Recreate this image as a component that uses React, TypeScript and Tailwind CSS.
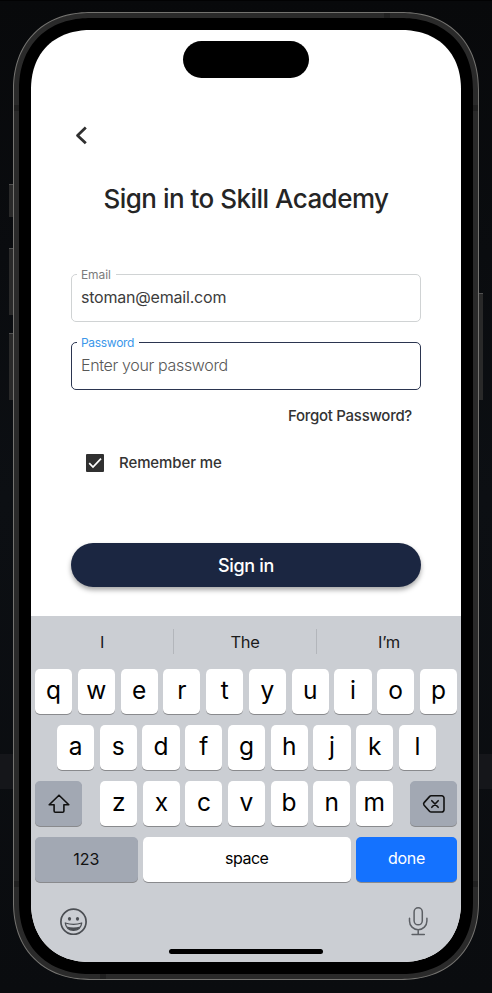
import type { ReactNode } from "react";

function Field({ label, value, focused }: { label: string; value: string; focused?: boolean }) {
  return (
    <fieldset
      className={`h-[54px] rounded-[5px] border px-[5px] ${
        focused ? "border-[#2b3550]" : "border-[#d0d3d4]"
      }`}
    >
      <legend
        className={`h-[12px] px-[4px] pt-[0.5px] text-[12px] leading-[12px] ${
          focused ? "w-[62px] tracking-[-0.3px] text-[#3b97ea]" : "w-[39px] tracking-[-0.1px] text-[#7b7b7b]"
        }`}
      >
        {label}
      </legend>
      <div
        className={`px-[4px] pt-[7px] text-[16px] leading-[20px] whitespace-nowrap ${
          focused ? "font-light tracking-[-0.34px] text-[#585858]" : "tracking-[-0.2px] text-[#3c3c3c]"
        }`}
      >
        {value}
      </div>
    </fieldset>
  );
}

function Key({ children, className = "" }: { children: ReactNode; className?: string }) {
  return (
    <div
      className={`flex h-[45px] items-center justify-center rounded-[5px] shadow-[0_1px_0_#898a8d] ${className}`}
    >
      {children}
    </div>
  );
}

function Letters({ keys }: { keys: string }) {
  return (
    <>
      {keys.split("").map((k) => (
        <Key key={k} className="min-w-0 flex-1 bg-white pb-[3px] text-[24.5px] leading-[30px] font-[380] text-black">
          {k}
        </Key>
      ))}
    </>
  );
}

function Keyboard() {
  return (
    <div className="h-[346px] bg-[#cbced3] px-[4px] font-['Inter',sans-serif] text-[#111]">
      <div className="-mx-[4px] flex h-[51px] items-center text-[16.5px] tracking-[-0.3px] text-[#1b1b1b]">
        <div className="flex h-[25px] w-[143px] items-center justify-center border-r border-[#b3b6bb] pt-px">I</div>
        <div className="flex h-[25px] w-[143px] items-center justify-center border-r border-[#b3b6bb] pt-px">The</div>
        <div className="flex h-[25px] w-[144px] items-center justify-center pt-px">I’m</div>
      </div>
      <div className="mt-[2px] flex flex-col gap-[11px]">
        <div className="flex gap-[5.6px]">
          <Letters keys="qwertyuiop" />
        </div>
        <div className="flex gap-[5.6px] pr-[21px] pl-[22px]">
          <Letters keys="asdfghjkl" />
        </div>
        <div className="flex justify-between">
          <Key className="w-[47px] bg-[#a2a8b3]">
            <svg width="24" height="22" viewBox="0 0 24 22" fill="none" stroke="#111" strokeWidth="1.6" strokeLinejoin="round">
              <path d="M12 2.2 2.2 11.8h4.9v6.2q0 1.3 1.3 1.3h7.2q1.3 0 1.3-1.3v-6.2h4.9z" />
            </svg>
          </Key>
          <div className="ml-px flex w-[292.5px] gap-[5.6px]">
            <Letters keys="zxcvbnm" />
          </div>
          <Key className="w-[47px] bg-[#a2a8b3]">
            <svg width="24" height="22" viewBox="0 0 24 22" fill="none" stroke="#111" strokeWidth="1.6" strokeLinejoin="round" strokeLinecap="round">
              <path d="M9.2 2.8h10.6a2.2 2.2 0 0 1 2.2 2.2v11.8a2.2 2.2 0 0 1-2.2 2.2H9.2q-1 0-1.7-.8L2.1 12.2q-1-1.3 0-2.6l5.4-6q.7-.8 1.7-.8z" />
              <path d="m9.8 7.7 6.4 6.6M16.2 7.7 9.8 14.3" />
            </svg>
          </Key>
        </div>
        <div className="flex gap-[5.5px] text-[16px]">
          <Key className="w-[102.5px] bg-[#a2a8b3] pb-px">123</Key>
          <Key className="flex-1 bg-white pb-[3px] tracking-[-0.5px] text-black">space</Key>
          <Key className="w-[101px] bg-[#1472ff] pb-[3px] tracking-[-0.3px] text-white">done</Key>
        </div>
      </div>
      <div className="flex justify-between pt-[25px] pr-[29px] pl-[25px]">
        <svg width="28" height="28" viewBox="0 0 28 28" fill="none" stroke="#4b4e53" strokeWidth="1.7">
          <circle cx="13.5" cy="14.8" r="12.6" />
          <ellipse cx="9.5" cy="11.8" rx="1.6" ry="1.9" fill="#4b4e53" stroke="none" />
          <ellipse cx="17.5" cy="11.8" rx="1.6" ry="1.9" fill="#4b4e53" stroke="none" />
          <path d="M5.3 16q8.2 2.6 16.4 0-.9 7.3-8.2 7.3t-8.2-7.3z" strokeWidth="1.3" strokeLinejoin="round" />
          <path d="M6.7 19.4q6.8 2 13.6 0-2 3.8-6.8 3.8t-6.8-3.8z" fill="#4b4e53" stroke="none" />
        </svg>
        <svg width="20" height="30" viewBox="0 0 20 30" fill="none" stroke="#5c5f64" strokeWidth="1.5" strokeLinecap="round">
          <rect x="6.1" y=".8" width="8.2" height="17" rx="4.1" />
          <path d="M1.5 11.2v2.8a8.7 8.7 0 0 0 17.4 0v-2.8M10.2 22.7v4.8M4.1 27.5h12.2" />
        </svg>
      </div>
      <div className="mx-auto mt-[12px] h-[5px] w-[154px] rounded-full bg-black" />
    </div>
  );
}

function SignIn() {
  return (
    <div className="flex h-[586px] flex-col px-[40px] font-['Inter',sans-serif]">
      <div className="mx-auto mt-[11px] h-[37px] w-[126px] rounded-full bg-black" />
      <svg className="mt-[48px] ml-[4px] shrink-0" width="14" height="20" viewBox="0 0 14 20" fill="none" stroke="#303030" strokeWidth="2.8" strokeLinejoin="round">
        <path d="M10.8 1.6 2.5 9.4l8.3 7.9" />
      </svg>
      <h1 className="mt-[36px] h-[32px] pt-px text-center text-[26px] leading-[32px] font-medium tracking-[-0.52px] whitespace-nowrap text-[#252525]">
        Sign in to Skill Academy
      </h1>
      <div className="mt-[54px] flex flex-col gap-[14px]">
        <Field label="Email" value="stoman@email.com" />
        <Field label="Password" value="Enter your password" focused />
      </div>
      <div className="mt-[15px] h-[20px] pt-[0.5px] pr-[9px] text-right text-[15px] leading-[20px] font-medium tracking-[-0.28px] text-[#333]">
        Forgot Password?
      </div>
      <div className="mt-[28px] flex h-[20px] items-center gap-[15px] pl-[15px]">
        <svg className="-mt-px rounded-[1px] bg-[#303030]" width="18" height="18" viewBox="0 0 18 18" fill="none" stroke="white" strokeWidth="1.7">
          <path d="m3.2 9.2 3.8 3.9 8-8.5" />
        </svg>
        <span className="text-[15px] leading-[20px] font-medium tracking-[-0.1px] text-[#333]">Remember me</span>
      </div>
      <div className="mt-[70px] flex h-[44px] shrink-0 items-center justify-center rounded-[22px] bg-[#1b2641] pt-px text-[18px] font-medium tracking-[-0.3px] text-white shadow-[0_3px_5px_rgba(0,0,0,0.35)]">
        Sign in
      </div>
    </div>
  );
}

export default function App() {
  return (
    <div className="relative h-[993px] w-[492px] overflow-hidden bg-linear-to-b from-[#08090b] via-[#0c0f13] to-[#0a0c0f] pt-[12px] pl-[13px]">
      <div className="absolute top-0 left-0 h-px w-full bg-[#020203]" />
      <div className="absolute top-[754px] left-0 h-[35px] w-full bg-[#15161a]" />
      <div className="absolute top-[184px] left-[9px] h-[33px] w-[6px] border-t border-[#505050] bg-[#292929]" />
      <div className="absolute top-[248px] left-[9px] h-[67px] w-[6px] border-t border-[#505050] bg-[#292929]" />
      <div className="absolute top-[333px] left-[9px] h-[67px] w-[6px] border-t border-[#505050] bg-[#292929]" />
      <div className="absolute top-[293px] left-[477px] h-[107px] w-[6px] border-t border-[#505050] bg-[#292929]" />
      <div className="relative h-[968px] w-[466px] rounded-[78px] border border-[#747370] bg-[#2a2a2a] p-[5px] [corner-shape:superellipse(1.15)]">
        <div className="absolute top-[92px] left-0 h-[6px] w-full bg-[#202020]" />
        <div className="absolute top-[868px] left-0 h-[6px] w-full bg-[#202020]" />
        <div className="absolute top-0 left-[370px] h-[5px] w-[6px] bg-[#202020]" />
        <div className="absolute bottom-0 left-[86px] h-[5px] w-[6px] bg-[#202020]" />
        <div className="relative h-[956px] w-[454px] rounded-[72px] bg-black p-[12px] [corner-shape:superellipse(1.15)]">
          <div className="h-[932px] w-[430px] overflow-hidden rounded-[60px] bg-white [corner-shape:superellipse(1.15)]">
            <SignIn />
            <Keyboard />
          </div>
        </div>
      </div>
    </div>
  );
}
